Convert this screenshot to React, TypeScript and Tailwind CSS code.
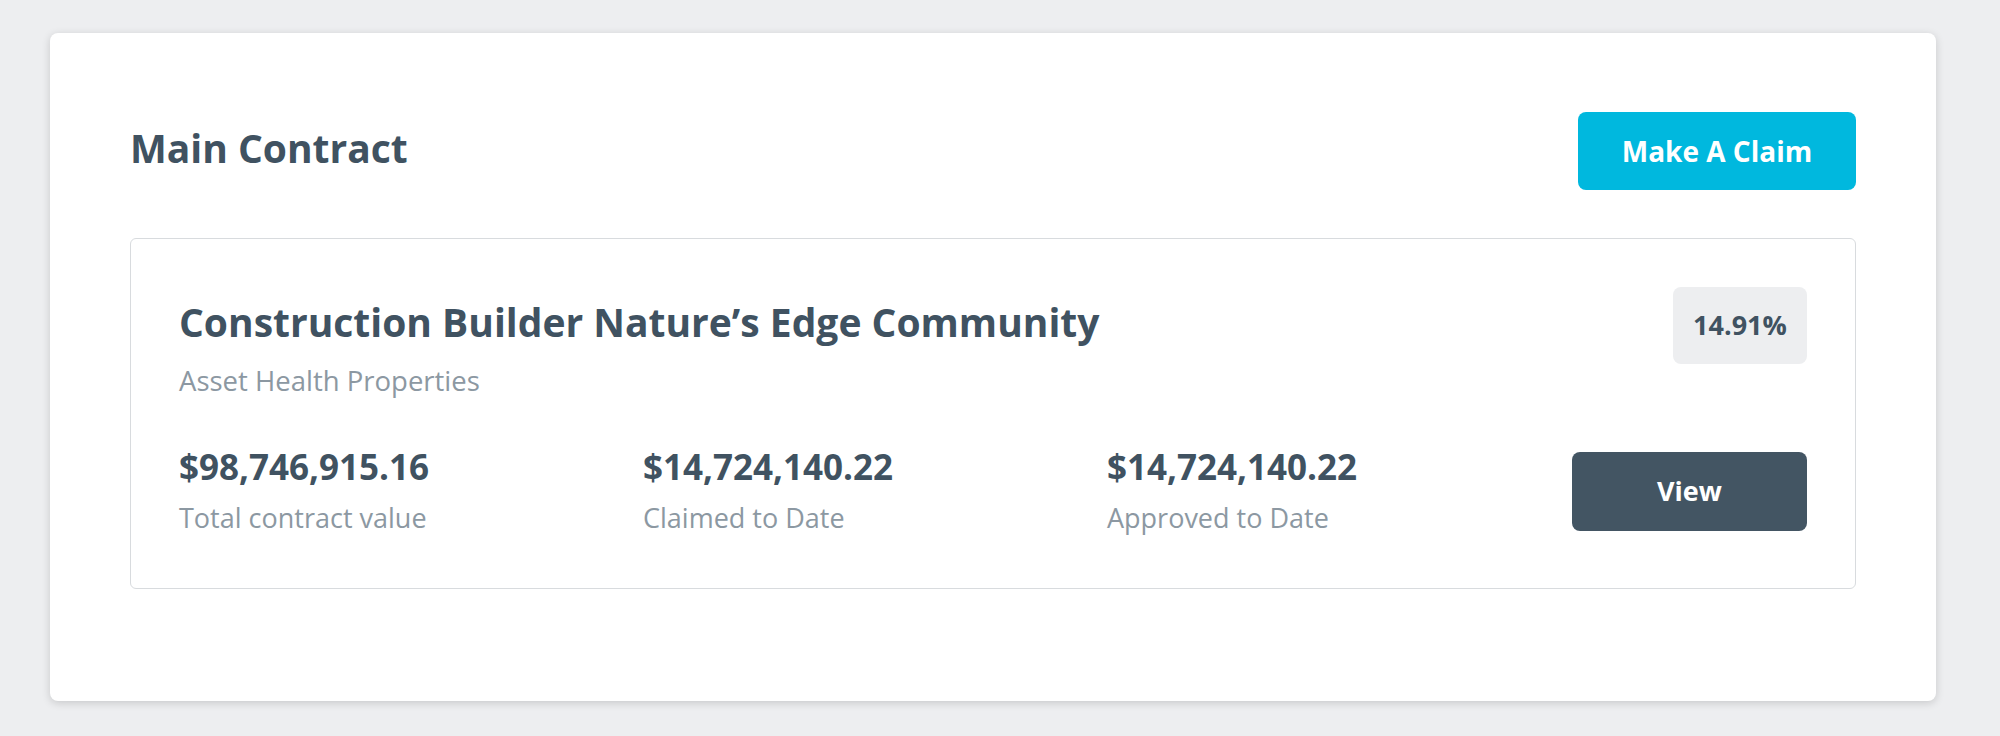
const stats = [
  { value: '$98,746,915.16', label: 'Total contract value' },
  { value: '$14,724,140.22', label: 'Claimed to Date' },
  { value: '$14,724,140.22', label: 'Approved to Date' },
]

function Stat({ value, label, wide }: { value: string; label: string; wide?: boolean }) {
  return (
    <div className={wide ? 'w-[464px] shrink-0' : 'flex-1'}>
      <div className="text-[35px] font-bold leading-[44px] text-[#405261]">{value}</div>
      <div className="mt-[10px] text-[27px] leading-[38px] text-[#8c98a2]">{label}</div>
    </div>
  )
}

export default function App() {
  return (
    <div
      className="min-h-[736px] bg-[#edeef0] pl-[50px] pr-[64px] pt-[33px]"
      style={{ fontFamily: '"Open Sans", "Noto Sans", sans-serif' }}
    >
      <div className="rounded-lg bg-white px-20 pb-[112px] pt-[79px] shadow-[0_2px_8px_rgba(0,0,0,0.16)]">
        <div className="flex items-center justify-between">
          <h1 className="pb-[7px] text-[39px] font-bold leading-[46px] text-[#405261]">Main Contract</h1>
          <button
            type="button"
            className="h-[78px] w-[278px] rounded-lg bg-[#00b8de] text-[28px] font-bold text-white"
          >
            Make A Claim
          </button>
        </div>

        <div className="mt-12 rounded-md border border-[#d8dbde] px-12 pb-[51px] pt-12">
          <div className="flex items-start justify-between">
            <div className="pt-[12px]">
              <h2 className="text-[39px] font-bold leading-[46px] text-[#405261]">
                Construction Builder Nature’s Edge Community
              </h2>
              <p className="mt-[17px] text-[27.5px] leading-[38px] text-[#8c98a2]">
                Asset Health Properties
              </p>
            </div>
            <div className="flex h-[77px] w-[134px] items-center justify-center rounded-lg bg-[#edeef0] text-[27px] font-bold text-[#405261]">
              14.91%
            </div>
          </div>

          <div className="mt-[45px] flex items-center">
            <Stat value={stats[0].value} label={stats[0].label} wide />
            <Stat value={stats[1].value} label={stats[1].label} wide />
            <Stat value={stats[2].value} label={stats[2].label} />
            <button
              type="button"
              className="h-[79px] w-[235px] rounded-lg bg-[#435563] text-[27px] font-bold text-white"
            >
              View
            </button>
          </div>
        </div>
      </div>
    </div>
  )
}
